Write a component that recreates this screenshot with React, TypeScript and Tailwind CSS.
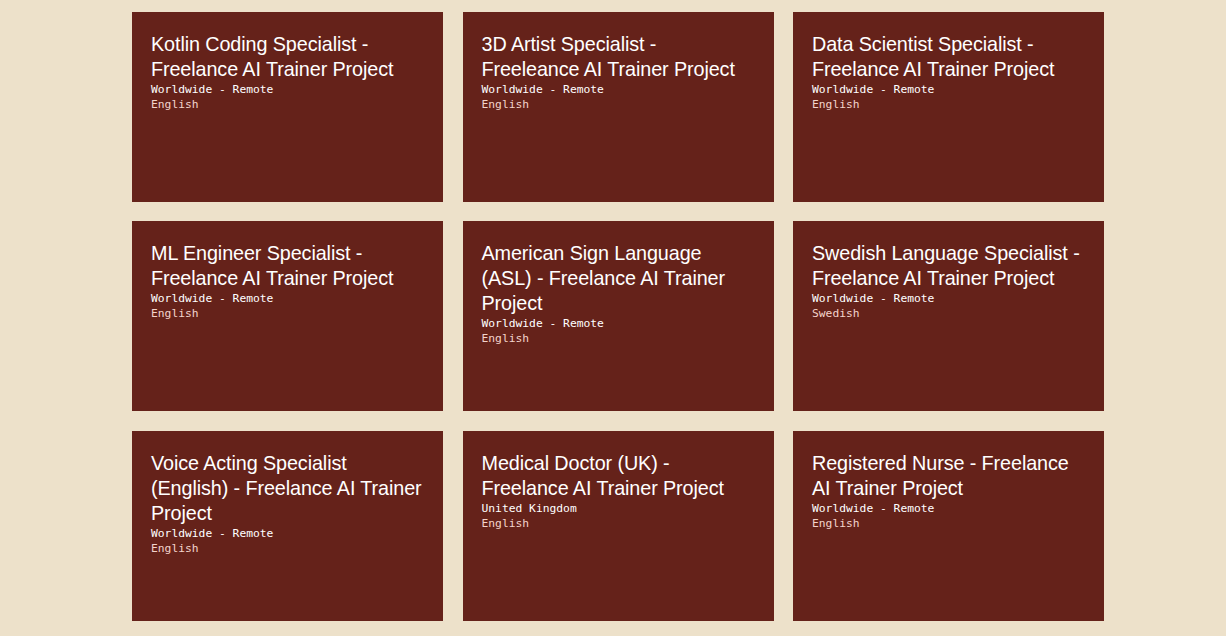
const jobs = [
  { title: 'Kotlin Coding Specialist - Freelance AI Trainer Project', loc: 'Worldwide - Remote', lang: 'English' },
  { title: '3D Artist Specialist - Freeleance AI Trainer Project', loc: 'Worldwide - Remote', lang: 'English' },
  { title: 'Data Scientist Specialist - Freelance AI Trainer Project', loc: 'Worldwide - Remote', lang: 'English' },
  { title: 'ML Engineer Specialist - Freelance AI Trainer Project', loc: 'Worldwide - Remote', lang: 'English' },
  { title: 'American Sign Language (ASL) - Freelance AI Trainer Project', loc: 'Worldwide - Remote', lang: 'English' },
  { title: 'Swedish Language Specialist - Freelance AI Trainer Project', loc: 'Worldwide - Remote', lang: 'Swedish' },
  { title: 'Voice Acting Specialist (English) - Freelance AI Trainer Project', loc: 'Worldwide - Remote', lang: 'English' },
  { title: 'Medical Doctor (UK) - Freelance AI Trainer Project', loc: 'United Kingdom', lang: 'English' },
  { title: 'Registered Nurse - Freelance AI Trainer Project', loc: 'Worldwide - Remote', lang: 'English' },
];

export default function App() {
  return (
    <div className="min-h-screen bg-[#ede1ca] pt-3 pb-4">
      <div className="ml-[132px] grid w-[972px] grid-cols-[311px_311px_311px] gap-x-[19.5px] gap-y-[19.3px]">
        {jobs.map((job) => (
          <div key={job.title} className="h-[190px] bg-[#65221a] pl-[19px] pr-[21px] pt-[20px]">
            <h3 className="font-['Liberation_Sans',sans-serif] text-[19.8px] leading-[25px] tracking-[-0.1px] text-white">
              {job.title}
            </h3>
            <p className="font-['DejaVu_Sans_Mono',monospace] text-[11.3px] leading-[15px] text-white">{job.loc}</p>
            <p className="font-['DejaVu_Sans_Mono',monospace] text-[11.3px] leading-[15px] text-[#f3d3cb]">{job.lang}</p>
          </div>
        ))}
      </div>
    </div>
  );
}
